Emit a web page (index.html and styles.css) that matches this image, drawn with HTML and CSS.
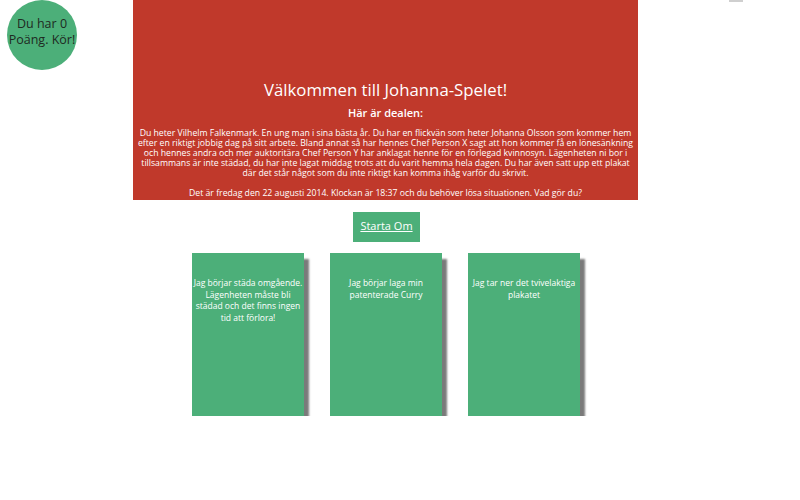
FILE: index.html
```html
<!DOCTYPE html>
<html lang="sv">
<head>
<meta charset="utf-8">
<title>Johanna-Spelet</title>
<link rel="stylesheet" href="styles.css">
</head>
<body>
<div class="score">Du har 0<br>Poäng. Kör!</div>
<div class="corner"></div>
<main class="game">
  <section class="intro">
    <h1 class="title">Välkommen till Johanna-Spelet!</h1>
    <h2 class="subtitle">Här är dealen:</h2>
    <p class="story">Du heter Vilhelm Falkenmark. En ung man i sina bästa år. Du har en flickvän som heter Johanna Olsson som kommer hem efter en riktigt jobbig dag på sitt arbete. Bland annat så har hennes Chef Person X sagt att hon kommer få en lönesänkning och hennes andra och mer auktoritära Chef Person Y har anklagat henne för en förlegad kvinnosyn. Lägenheten ni bor i tillsammans är inte städad, du har inte lagat middag trots att du varit hemma hela dagen. Du har även satt upp ett plakat där det står något som du inte riktigt kan komma ihåg varför du skrivit.</p>
    <p class="story time">Det är fredag den 22 augusti 2014. Klockan är 18:37 och du behöver lösa situationen. Vad gör du?</p>
  </section>
  <a class="restart" href="#">Starta Om</a>
  <div class="choices">
    <div class="card">Jag börjar städa omgående. Lägenheten måste bli städad och det finns ingen tid att förlora!</div>
    <div class="card">Jag börjar laga min patenterade Curry</div>
    <div class="card">Jag tar ner det tvivelaktiga plakatet</div>
  </div>
</main>
</body>
</html>
```
FILE: styles.css
```css
html, body {
  margin: 0;
  padding: 0;
  background: #ffffff;
  font-family: "Open Sans", "Noto Sans", sans-serif;
}

.score {
  position: absolute;
  left: 7px;
  top: 0;
  width: 70px;
  height: 70px;
  box-sizing: border-box;
  padding-bottom: 6px;
  border-radius: 50%;
  background: #4caf79;
  color: #1e2a22;
  font-size: 12.5px;
  line-height: 16px;
  text-align: center;
  display: flex;
  align-items: center;
  justify-content: center;
}

.corner {
  position: absolute;
  left: 729px;
  top: 0;
  width: 14px;
  height: 2px;
  background: #cfcfcf;
}

.game {
  margin-left: 133px;
  width: 505px;
  display: flex;
  flex-direction: column;
  align-items: center;
}

.intro {
  box-sizing: border-box;
  width: 505px;
  height: 200px;
  background: #c0392b;
  color: #ffffff;
  text-align: center;
  display: flex;
  flex-direction: column;
  justify-content: flex-end;
  padding: 0 2px 2px;
}

.title {
  margin: 0 0 5px;
  font-size: 16.8px;
  font-weight: 400;
  line-height: 22px;
}

.subtitle {
  margin: 0 0 8px;
  font-size: 11px;
  font-weight: 600;
  line-height: 14px;
}

.story {
  margin: 0;
  font-size: 8.7px;
  line-height: 10px;
}

.time {
  margin-top: 10px;
}

.restart {
  margin-top: 12px;
  margin-left: 2px;
  width: 67px;
  height: 30px;
  background: #4caf79;
  color: #ffffff;
  font-size: 11px;
  line-height: 27px;
  text-align: center;
  text-decoration: underline;
}

.choices {
  margin-top: 11px;
  display: flex;
  gap: 26px;
  margin-left: 1px;
}

.card {
  box-sizing: border-box;
  width: 112px;
  height: 163px;
  background: #4caf79;
  color: #ffffff;
  font-size: 8.5px;
  line-height: 11.5px;
  text-align: center;
  padding: 24px 0 0;
  box-shadow: 5px 6px 2px #7a7a7a;
}
```
